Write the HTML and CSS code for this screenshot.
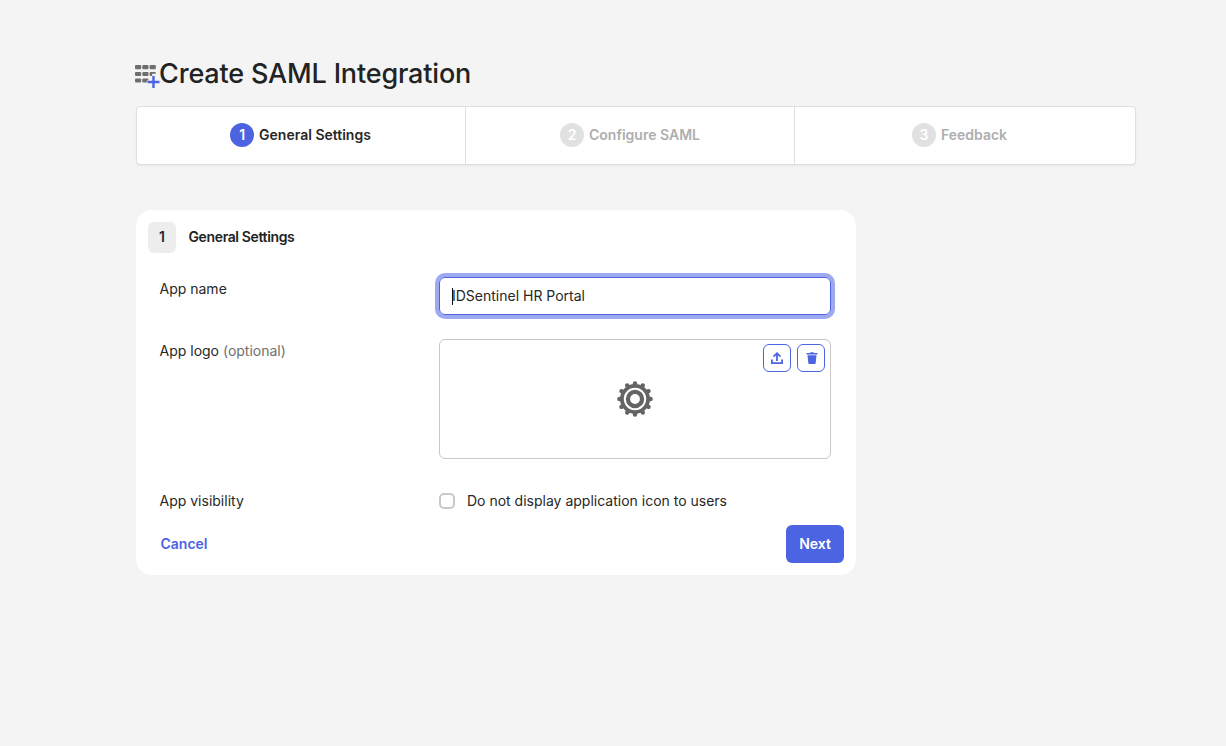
FILE: index.html
```html
<!DOCTYPE html>
<html lang="en">
<head>
<meta charset="utf-8">
<title>Create SAML Integration</title>
<link rel="stylesheet" href="styles.css">
</head>
<body>
<main class="page">
  <header class="page-header">
    <svg class="apps-icon" width="26" height="26" viewBox="0 0 26 26">
      <g fill="#6e6e6e">
        <rect x="0" y="2" width="6.2" height="4.2" rx="1"/><rect x="7.3" y="2" width="6.2" height="4.2" rx="1"/><rect x="14.6" y="2" width="6.2" height="4.2" rx="1"/>
        <rect x="0" y="9" width="6.2" height="4" rx="1"/><rect x="7.3" y="9" width="6.2" height="4" rx="1"/><path d="M15.6 9h4.2q1 0 1 1v.8h-3.6V13h-1.600q-1 0-1-1v-2q0-1 1-1z"/>
        <rect x="0" y="15.500" width="6.200" height="4" rx="1"/><path d="M8.300 15.500h5v2h-1.500v2H8.300q-1 0-1-1v-2q0-1 1-1z"/>
      </g>
      <path d="M18.500 13v12M12.500 19h12" stroke="#4c64e1" stroke-width="2.400"/>
    </svg>
    <h1 class="page-title">Create SAML Integration</h1>
  </header>
  <ol class="steps">
    <li class="step step-active"><span class="step-number">1</span><span class="step-label">General Settings</span></li>
    <li class="step"><span class="step-number">2</span><span class="step-label">Configure SAML</span></li>
    <li class="step"><span class="step-number">3</span><span class="step-label">Feedback</span></li>
  </ol>
  <section class="card">
    <div class="card-header"><span class="card-badge">1</span><h2 class="card-title">General Settings</h2></div>
    <div class="field field-name">
      <label class="field-label">App name</label>
      <div class="text-input"><span class="caret"></span><span>IDSentinel HR Portal</span></div>
    </div>
    <div class="field field-logo">
      <span class="field-label">App logo <span class="optional">(optional)</span></span>
      <div class="logo-box">
        <svg class="gear" width="36" height="36" viewBox="-18 -18 36 36">
          <circle r="15" fill="#646464"/>
          <g stroke="#646464" stroke-width="4.400" stroke-linecap="round">
            <path id="tooth" d="M0-15.600V15.600"/>
            <use href="#tooth" transform="rotate(30)"/><use href="#tooth" transform="rotate(60)"/><use href="#tooth" transform="rotate(90)"/><use href="#tooth" transform="rotate(120)"/><use href="#tooth" transform="rotate(150)"/>
          </g>
          <circle r="10.200" fill="#646464" stroke="#fff" stroke-width="2"/>
          <circle r="4.900" fill="#fff"/>
        </svg>
        <div class="logo-actions">
          <button class="icon-button" aria-label="Upload"><svg width="14" height="14" viewBox="0 0 14 14" fill="none" stroke="#4c64e1" stroke-width="1.800"><path d="M7 10V2M3.500 5.700 7 2.200l3.500 3.500M1.900 8.500v3.700h10.200V8.500"/></svg></button>
          <button class="icon-button icon-delete" aria-label="Delete"><svg width="14" height="14" viewBox="0 0 14 14" fill="#4c64e1"><path d="M1.500 2h3.500l.7-.8h2.600L9 2h3.500v1.500h-11zM2.500 4.300h9l-.8 7.700q-.1 1-1 1H4.300q-.9 0-1-1z"/></svg></button>
        </div>
      </div>
    </div>
    <div class="field field-visibility">
      <span class="field-label visibility-label">App visibility</span>
      <label class="check"><span class="checkbox"></span><span class="check-label">Do not display application icon to users</span></label>
    </div>
    <footer class="card-footer"><a class="cancel">Cancel</a><button class="next">Next</button></footer>
  </section>
</main>
</body>
</html>
```
FILE: styles.css
```css
* { box-sizing: border-box; }
body { margin: 0; background: #f4f4f4; color: #272727; font: 14px/20px Inter, "Liberation Sans", sans-serif; }
.page { width: 1000px; margin: 0 0 0 136px; padding-top: 54px; }
.page-header { display: flex; height: 52px; margin-left: -1px; }
.apps-icon { flex: none; margin-top: 9px; margin-right: -2px; }
.page-title { margin: 0; padding-top: 1px; font-size: 27px; line-height: 38px; font-weight: 500; letter-spacing: -.17px; white-space: nowrap; color: #222; }
.steps { display: grid; grid-template-columns: 329px 329px 1fr; height: 59px; margin: 0; padding: 0; list-style: none; background: #fff; border: 1px solid #dfdfdf; border-radius: 4px; box-shadow: 0 1px 2px #00000010; }
.step { display: flex; align-items: center; justify-content: center; gap: 5px; padding-bottom: 2px; color: #aeaeae; font-weight: 600; border-right: 1px solid #dfdfdf; }
.step:last-child { padding-right: 11px; border-right: 0; }
.step-number { display: grid; place-items: center; width: 24px; height: 24px; border-radius: 50%; background: #e1e1e1; color: #fff; }
.step-active { padding-right: 1px; color: #272727; }
.step-active .step-number { background: #4c64e1; }
.card { width: 720px; height: 365px; margin-top: 45px; padding: 12px; background: #fff; border-radius: 16px; }
.card-header { display: flex; align-items: center; gap: 12.5px; height: 31px; }
.card-badge { display: grid; place-items: center; width: 28px; height: 31px; padding-bottom: 1px; border-radius: 6px; background: #ededed; font-weight: 600; }
.card-title { margin: 0; padding-bottom: 2px; font-size: 14px; font-weight: 600; letter-spacing: -.37px; color: #222; }
.field { display: grid; grid-template-columns: 279.5px 392px; padding-left: 11.5px; }
.field-name { margin-top: 24px; }
.field-label { padding-top: 2px; }
.optional { color: #707070; }
.text-input { display: flex; align-items: center; height: 38px; padding-left: 12px; border: 1px solid #4c64e1; border-radius: 6px; box-shadow: 0 0 0 4px #9daaf2; }
.caret { width: 1px; height: 17px; margin-right: -1px; background: #111; }
.field-logo { margin-top: 24px; }
.logo-box { position: relative; display: grid; place-items: center; height: 120px; padding-bottom: 1px; border: 1px solid #c8c8c8; border-radius: 6px; }
.logo-actions { position: absolute; top: 4px; right: 5px; display: flex; gap: 6px; }
.icon-button { display: grid; place-items: center; width: 28px; height: 28px; padding: 0; border: 1px solid #4c64e1; border-radius: 6px; background: #fff; }
.icon-delete { padding-left: 2px; }
.field-visibility { margin-top: 32px; }
.visibility-label { padding-top: 0; }
.check { display: flex; align-items: center; gap: 12px; }
.checkbox { width: 16px; height: 16px; border: 2px solid #c8c8c8; border-radius: 5px; }
.card-footer { display: flex; align-items: center; justify-content: space-between; margin-top: 14px; padding-left: 12.5px; }
.cancel { color: #4c64e1; font-weight: 600; }
.next { width: 58px; height: 38px; padding: 0; border: 0; border-radius: 6px; background: #4c64e1; color: #fff; font: inherit; font-weight: 600; }
```
